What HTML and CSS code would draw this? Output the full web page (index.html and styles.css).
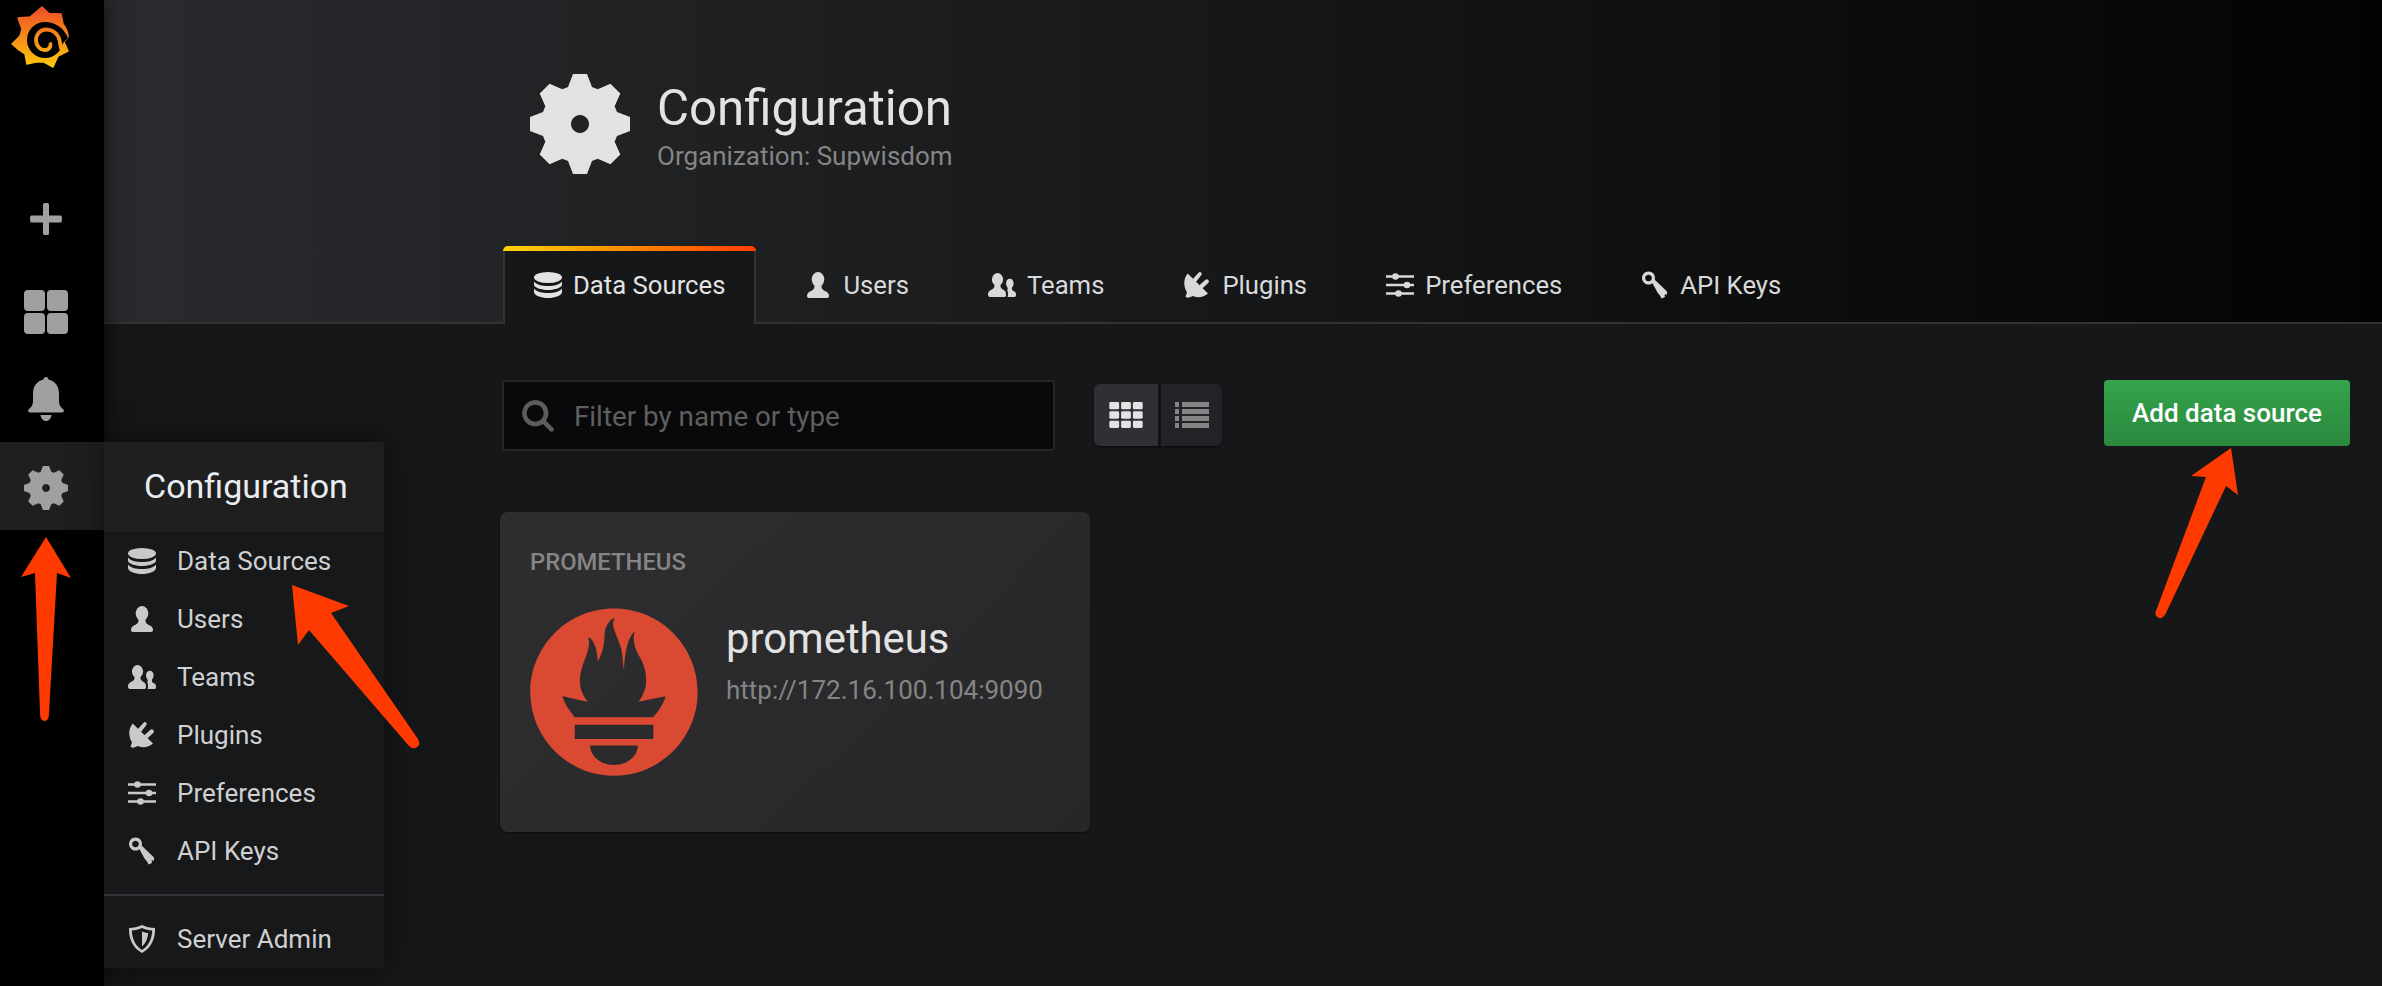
FILE: index.html
```html
<!DOCTYPE html>
<html lang="en">
<head>
<meta charset="utf-8">
<title>Configuration</title>
<link rel="stylesheet" href="styles.css">
</head>
<body>
<svg class="defs" width="0" height="0" aria-hidden="true">
  <defs>
    <linearGradient id="logo-grad" gradientUnits="userSpaceOnUse" x1="0" y1="10" x2="0" y2="68"><stop offset="0" stop-color="#ef5326"/><stop offset="1" stop-color="#fccb0c"/></linearGradient>
    <symbol id="i-gear" viewBox="0 0 100 100"><path fill-rule="evenodd" d="M38 13L43 0H57L62 13L67.68 15.35L80.41 9.69L90.31 19.59L84.65 32.32L87 38L100 43V57L87 62L84.65 67.68L90.31 80.41L80.41 90.31L67.68 84.65L62 87L57 100H43L38 87L32.32 84.65L19.59 90.31L9.69 80.41L15.35 67.68L13 62L0 57V43L13 38L15.35 32.32L9.69 19.59L19.59 9.69L32.32 15.35ZM50 41a9 9 0 1 0 .01 0Z"/></symbol>
    <symbol id="i-db" viewBox="0 0 28 26"><ellipse cx="14" cy="5.5" rx="14" ry="5.5"/><path d="M0 9.5C2 12.6 8 14 14 14S26 12.6 28 9.5V12.5C28 15.6 21 18 14 18S0 15.6 0 12.5Z"/><path d="M0 16.5C2 19.6 8 21 14 21S26 19.6 28 16.5V20C28 23.4 21 26 14 26S0 23.4 0 20Z"/></symbol>
    <symbol id="i-user" viewBox="0 0 22 26"><ellipse cx="11" cy="7.500" rx="6.300" ry="7.500"/><path d="M7.500 12.500C8 17 6 18 3 19.500C1 20.500 0 22 0 24C0 25.300.7 26 2 26H20C21.300 26 22 25.300 22 24C22 22 21 20.500 19 19.500C16 18 14 17 14.500 12.500Z"/></symbol>
    <symbol id="i-users" viewBox="0 0 28 24"><ellipse cx="9.500" cy="6.500" rx="5.600" ry="6.500"/><path d="M6.500 11C7 15 5 16 2.500 17.300C.8 18.200 0 19.500 0 21.500C0 23 .7 24 2 24H16.500C17.600 24 18 23 18 21.500C18 19.500 17.500 18.200 16 17.300C14 16 12 15 12.500 11Z"/><ellipse cx="21.800" cy="10.500" rx="3.800" ry="4.800"/><path d="M19.500 14C20 16.500 19.500 17 19 17C20 18.200 20 20 20 21.500C20 22.800 19.800 23.500 19.500 24H26.500C27.500 24 28 23.300 28 22C28 20 27.500 19 26 18.300C24.500 17.500 23.600 17 24 14Z"/></symbol>
    <symbol id="i-plug" viewBox="0 0 26 26"><path d="M3.700 1.500L24 21.500C20 25 14 26.500 9 24L5 25.500C3.500 26 2 25.500 1.500 24.500L3 20.500C-.5 15-1 7 3.700 1.500Z"/><path d="M8.500 7.500L14.500.8C15.500-.2 16.500-.2 17.300.8C18 2 17.800 2.500 17 3.500L11.500 10.500Z"/><path d="M15 13.500L21.500 7.800C22.500 7 23.500 7 24.300 8C25.300 9.500 25 10 24.200 11L18 16.800Z"/></symbol>
    <symbol id="i-sliders" viewBox="0 0 28 24"><path d="M0 2.300H28V4.700H0ZM0 10.800H28V13.200H0ZM0 19.300H28V21.700H0Z"/><circle cx="9.500" cy="3.500" r="3.300"/><circle cx="21" cy="12" r="3.300"/><circle cx="12.500" cy="20.500" r="3.300"/></symbol>
    <symbol id="i-key" viewBox="0 0 26 28"><path fill-rule="evenodd" d="M6.500 .5A6.500 6.500 0 1 1 6.490 .5ZM6.500 3.700A3.300 3.300 0 1 0 6.510 3.700Z"/><path d="M9 9.500L11.500 7.500L25 20.500L25 23.500L22.500 23.500L23 26L19.500 27.500L18 24.500L15.500 21.500Z"/></symbol>
    <symbol id="i-shield" viewBox="0 0 26 28"><path fill-rule="evenodd" d="M13 0C17 2 21.500 2.800 26 3C26.500 13 22.500 23 13 28C3.500 23-.5 13 0 3C4.500 2.800 9 2 13 0ZM13 3C9.800 4.500 6.200 5.300 2.800 5.600C3 13 6 21 13 25C20 21 23 13 23.200 5.600C19.800 5.300 16.200 4.500 13 3Z"/><path d="M13 6.500V21.500C17 18 18.800 13 19.200 8.200C17 8 15 7.400 13 6.500Z"/></symbol>
    <symbol id="i-search" viewBox="0 0 34 34"><path fill-rule="evenodd" d="M14 0A14 14 0 0 1 25.500 22L33 29.500C34.200 30.700 34.200 32 33.200 33C32.200 34 30.800 34 29.700 33L22.200 25.500A14 14 0 1 1 14 0ZM14 5A9 9 0 1 0 14.010 5Z"/></symbol>
  </defs>
</svg>

<nav class="sidebar">
  <a class="side-logo" href="#">
    <svg class="logo-svg" viewBox="0 0 90 80">
      <path fill="url(#logo-grad)" stroke="url(#logo-grad)" stroke-width="1.500" stroke-linejoin="round" d="M42 7L49 13.500L61 14L63 24C66 28 68 32 68 37L64 42L68 51L58 56L53 67L44 62L36 62L27 64L25 54L19 50L12 44L20 36L22 29L18 18L30 17Z"/>
      <circle cx="45" cy="40" r="18" fill="#000"/>
      <path d="M50 22.500C58 24 65 30 68 38L62 44C60 35 56 29 48 26Z" fill="#000"/>
      <path fill="none" stroke="url(#logo-grad)" stroke-width="3.800" stroke-linecap="round" d="M63 50C61 52 60.500 44 59.500 40C57.500 33 52 29.500 46 29.500C40 29.500 36 34.500 36 40C36 46 40.500 50 45 50C48.500 50 51 47 50.500 44"/>
    </svg>
  </a>
  <a class="side-item" href="#"><svg class="side-plus" viewBox="0 0 32 32"><path d="M13 1.500C13 .5 14 0 16 0S19 .5 19 1.500V12.500H30.500C31.500 12.500 32 13.500 32 16S31.500 19.500 30.500 19.500H19V30.500C19 31.500 18 32 16 32S13 31.500 13 30.500V19.500H1.500C.5 19.500 0 18.500 0 16S.5 12.500 1.500 12.500H13Z"/></svg></a>
  <a class="side-item side-item-dash" href="#">
    <span class="dash-grid"><i></i><i></i><i></i><i></i></span>
  </a>
  <a class="side-item side-item-bell" href="#"><svg class="side-bell" viewBox="0 0 36 44"><path d="M18 0C19.500 0 20.500 1 20.500 2.500C27 4 31 9 31 17V24C31 28 32.500 30 35 32C36.500 33.500 36 35.500 34 35.500H2C0 35.500-.5 33.500 1 32C3.500 30 5 28 5 24V17C5 9 9 4 15.500 2.500C15.500 1 16.500 0 18 0Z"/><path d="M12.500 38H23.500C23 41.500 21 44 18 44S13 41.500 12.500 38Z"/></svg></a>
  <a class="side-item side-item-active" href="#"><svg class="side-gear"><use href="#i-gear"/></svg></a>
</nav>

<main class="main">
  <header class="page-header">
    <div class="page-title-row">
      <svg class="title-gear"><use href="#i-gear"/></svg>
      <div class="title-text">
        <h1 class="page-title">Configuration</h1>
        <div class="page-sub">Organization: Supwisdom</div>
      </div>
    </div>
    <ul class="tabs">
      <li class="tab tab-active"><span class="ico-box"><svg class="ico-db"><use href="#i-db"/></svg></span>Data Sources</li>
      <li class="tab"><span class="ico-box"><svg class="ico-user"><use href="#i-user"/></svg></span>Users</li>
      <li class="tab"><span class="ico-box"><svg class="ico-users"><use href="#i-users"/></svg></span>Teams</li>
      <li class="tab"><span class="ico-box"><svg class="ico-plug"><use href="#i-plug"/></svg></span>Plugins</li>
      <li class="tab"><span class="ico-box"><svg class="ico-sliders"><use href="#i-sliders"/></svg></span>Preferences</li>
      <li class="tab"><span class="ico-box"><svg class="ico-key"><use href="#i-key"/></svg></span>API Keys</li>
    </ul>
  </header>

  <section class="content">
    <div class="toolbar">
      <label class="search">
        <svg class="search-ico"><use href="#i-search"/></svg>
        <span class="search-ph">Filter by name or type</span>
      </label>
      <div class="toggle">
        <span class="toggle-btn toggle-on">
          <svg class="grid-ico" viewBox="0 0 34 26.500"><rect x="0" y="0" width="10" height="7.500" rx="1.500"/><rect x="12" y="0" width="10" height="7.500" rx="1.500"/><rect x="24" y="0" width="10" height="7.500" rx="1.500"/><rect x="0" y="9.500" width="10" height="7.500" rx="1.500"/><rect x="12" y="9.500" width="10" height="7.500" rx="1.500"/><rect x="24" y="9.500" width="10" height="7.500" rx="1.500"/><rect x="0" y="19" width="10" height="7.500" rx="1.500"/><rect x="12" y="19" width="10" height="7.500" rx="1.500"/><rect x="24" y="19" width="10" height="7.500" rx="1.500"/></svg>
        </span>
        <span class="toggle-btn">
          <svg class="list-ico" viewBox="0 0 34 26"><rect x="0" y="0" width="4" height="5"/><rect x="7" y="0" width="27" height="5"/><rect x="0" y="7" width="4" height="5"/><rect x="7" y="7" width="27" height="5"/><rect x="0" y="14" width="4" height="5"/><rect x="7" y="14" width="27" height="5"/><rect x="0" y="21" width="4" height="5"/><rect x="7" y="21" width="27" height="5"/></svg>
        </span>
      </div>
      <a class="add-btn" href="#">Add data source</a>
    </div>

    <article class="card">
      <div class="card-type">PROMETHEUS</div>
      <div class="card-body">
        <svg class="prom-logo" viewBox="0 0 256 257"><path d="M128.001.667C57.311.667 0 57.971 0 128.664c0 70.69 57.31 127.998 128.001 127.998S256 199.354 256 128.664C256 57.97 198.689.667 128 .667zm0 239.562c-20.112 0-36.419-13.435-36.419-30.004h72.838c0 16.57-16.307 30.004-36.419 30.004zm60.15-39.94H67.842V178.47h120.31v21.816h-.002zm-.432-33.045H68.185c-.398-.458-.804-.91-1.188-1.375-12.315-14.954-15.216-22.76-18.032-30.716-.048-.262 14.933 3.06 25.556 5.45 0 0 5.466 1.265 13.458 2.722-7.673-8.994-12.23-20.428-12.23-32.116 0-25.658 19.68-48.079 12.58-66.201 6.91.562 14.3 14.583 14.8 36.505 7.346-10.152 10.42-28.69 10.42-40.056 0-11.769 7.755-25.44 15.512-25.907-6.915 11.396 1.79 21.165 9.53 45.4 2.902 9.103 2.532 24.423 4.772 34.138.744-20.178 4.213-49.62 17.014-59.784-5.647 12.8.836 28.818 5.27 36.518 7.154 12.424 11.49 21.836 11.49 39.638 0 11.936-4.407 23.173-11.84 31.958 8.452-1.586 14.289-3.016 14.289-3.016l27.45-5.355c.002-.002-3.987 16.401-19.314 32.197z"/></svg>
        <div class="card-info">
          <div class="card-name">prometheus</div>
          <div class="card-url">http://172.16.100.104:9090</div>
        </div>
      </div>
    </article>
  </section>
</main>

<aside class="menu">
  <div class="menu-head">Configuration</div>
  <ul class="menu-list">
    <li class="menu-row"><span class="ico-box"><svg class="ico-db"><use href="#i-db"/></svg></span>Data Sources</li>
    <li class="menu-row"><span class="ico-box"><svg class="ico-user"><use href="#i-user"/></svg></span>Users</li>
    <li class="menu-row"><span class="ico-box"><svg class="ico-users"><use href="#i-users"/></svg></span>Teams</li>
    <li class="menu-row"><span class="ico-box"><svg class="ico-plug"><use href="#i-plug"/></svg></span>Plugins</li>
    <li class="menu-row"><span class="ico-box"><svg class="ico-sliders"><use href="#i-sliders"/></svg></span>Preferences</li>
    <li class="menu-row"><span class="ico-box"><svg class="ico-key"><use href="#i-key"/></svg></span>API Keys</li>
    <li class="menu-divider"></li>
    <li class="menu-row"><span class="ico-box"><svg class="ico-shield"><use href="#i-shield"/></svg></span>Server Admin</li>
  </ul>
</aside>

<svg class="arrows" viewBox="0 0 2382 986" aria-hidden="true">
  <path d="M46 537L71 578L57 573L49 713Q49 721 44.500 721Q40 721 40 713L35 573L21 577Z"/>
  <path d="M292 585L349 606L331 613L418 739Q421 744 417 747Q413 750 409 746L309 630L298 645Z"/>
  <path d="M2231 448L2238 495L2226 486L2166 613Q2163 619 2159 618Q2154 616 2156 611L2206 477L2191 476Z"/>
</svg>
</body>
</html>
```

FILE: styles.css
```css
* { box-sizing: border-box; }
html, body { height: 100%; }
body {
  margin: 0;
  display: flex;
  min-height: 986px;
  overflow: hidden;
  background: #161719;
  color: #d8d9da;
  font-family: Roboto, "Liberation Sans", sans-serif;
  font-size: 26px;
}
.defs { position: absolute; }
a { color: inherit; text-decoration: none; }
ul { list-style: none; margin: 0; padding: 0; }

/* sidebar */
.sidebar {
  flex: 0 0 104px;
  width: 104px;
  background: #000;
  display: flex;
  flex-direction: column;
  box-shadow: 0 0 22px rgba(0, 0, 0, .75);
  position: relative;
  z-index: 2;
  fill: #a0a0a0;
}
.side-logo { height: 176px; display: block; }
.logo-svg { width: 90px; height: 80px; display: block; }
.side-item { height: 86px; padding-right: 12px; display: flex; align-items: center; justify-content: center; }
.side-item-dash { margin-top: 7px; }
.side-item-bell { height: 87px; }
.side-item-active { height: 88px; padding-top: 4px; background: #1f1f20; }
.side-plus { width: 32px; height: 32px; }
.side-bell { width: 36px; height: 44px; }
.side-gear { width: 44px; height: 44px; }
.dash-grid { display: grid; grid-template-columns: 21px 21px; gap: 2px; }
.dash-grid i { display: block; height: 21px; border-radius: 4px; background: #a0a0a0; }

/* header */
.main { flex: 1; min-width: 0; display: flex; flex-direction: column; }
.page-header {
  height: 324px;
  padding-left: 399px;
  display: flex;
  flex-direction: column;
  justify-content: space-between;
  background: linear-gradient(90deg, #2a2b2e 0%, #161718 50%, #030303 100%);
  border-bottom: 2px solid #323232;
}
.page-title-row { display: flex; align-items: flex-start; padding: 74px 0 0 27px; }
.title-gear { width: 100px; height: 100px; fill: #e3e3e3; margin-right: 27px; }
.title-text { padding-top: 6px; }
.page-title { margin: 0; font-size: 49.200px; font-weight: 400; line-height: 56px; color: #e3e3e3; }
.page-sub { font-size: 26px; line-height: 32px; margin-top: 4px; color: #858585; }

.tabs { display: flex; gap: 17px; margin-bottom: -2px; }
.tab {
  height: 78px;
  padding: 0 29px 2px;
  border: 2px solid transparent;
  border-bottom: 0;
  display: flex;
  align-items: center;
  gap: 11px;
  font-size: 25.700px;
  color: #d8d9da;
  fill: #d8d9da;
}
.tab-active {
  position: relative;
  background: #161719;
  border-color: #323232;
  border-radius: 6px 6px 0 0;
  color: #e3e3e3;
  fill: #e3e3e3;
}
.tab-active::before {
  content: "";
  position: absolute;
  top: -2px;
  left: -2px;
  right: -2px;
  height: 5px;
  border-radius: 6px 6px 0 0;
  background: linear-gradient(90deg, #ffd500, #ff3c00);
}

.ico-box { flex: 0 0 28px; width: 28px; display: flex; align-items: center; justify-content: center; }
.ico-db { width: 28px; height: 26px; }
.ico-user { width: 22px; height: 26px; }
.ico-users { width: 28px; height: 24px; }
.ico-plug { width: 26px; height: 26px; }
.ico-sliders { width: 28px; height: 24px; }
.ico-key { width: 26px; height: 28px; }
.ico-shield { width: 26px; height: 28px; }

/* content */
.content { flex: 1; padding: 56px 32px 0 396px; }
.toolbar { display: flex; align-items: flex-start; margin-bottom: 61px; }
.search {
  width: 553px;
  height: 71px;
  margin-left: 2px;
  padding-left: 18px;
  display: flex;
  align-items: center;
  gap: 20px;
  background: #09090b;
  border: 2px solid #262628;
  border-radius: 4px;
}
.search-ico { width: 32px; height: 32px; fill: #5c5c5c; }
.search-ph { color: #5f5f5f; font-size: 27.800px; padding-top: 1px; }
.toggle {
  margin: 4px 0 0 39px;
  width: 128px;
  height: 62px;
  display: flex;
  background: #222326;
  border-radius: 6px;
  box-shadow: 0 1px 2px rgba(0, 0, 0, .6);
  overflow: hidden;
}
.toggle-btn { flex: 1; display: flex; align-items: center; justify-content: center; fill: #858585; }
.toggle-on { flex: 0 0 67px; background: #2e3036; fill: #e3e3e3; border-right: 3px solid #111214; }
.grid-ico, .list-ico { width: 34px; height: 26px; }
.add-btn {
  margin-left: auto;
  width: 246px;
  height: 66px;
  display: flex;
  align-items: center;
  justify-content: center;
  border-radius: 4px;
  background: linear-gradient(180deg, #34a44c, #2b883e);
  color: #fff;
  font-weight: 500;
}

.card {
  width: 590px;
  height: 320px;
  padding: 38px 30px 0;
  border-radius: 8px;
  background: linear-gradient(135deg, #2e2e30, #272729);
  box-shadow: 0 1px 2px rgba(0, 0, 0, .5);
}
.card-type { font-size: 23.800px; line-height: 24px; font-weight: 500; color: #858585; }
.card-body { display: flex; align-items: flex-start; gap: 28px; margin-top: 34px; }
.prom-logo { width: 168px; height: 168px; fill: #da4a33; flex: none; }
.card-info { padding-top: 5px; }
.card-name { font-size: 41.800px; line-height: 52px; color: #e3e3e3; }
.card-url { font-size: 26px; line-height: 32px; margin-top: 9px; color: #858585; }

/* hover menu */
.menu {
  position: absolute;
  left: 104px;
  top: 442px;
  width: 280px;
  height: 526px;
  z-index: 3;
  background: #17181a;
  box-shadow: 0 0 30px rgba(0, 0, 0, .55);
}
.menu-head {
  height: 90px;
  padding: 0 0 2px 40px;
  display: flex;
  align-items: center;
  background: #1f1f20;
  color: #e9edf2;
  font-size: 34px;
}
.menu-row {
  height: 58px;
  padding-left: 24px;
  display: flex;
  align-items: center;
  gap: 21px;
  color: #cfd0d1;
  fill: #c9c9c9;
}
.menu-divider { height: 2px; margin: 14px 0; background: #333437; }

/* annotation arrows */
.arrows {
  position: absolute;
  left: 0;
  top: 0;
  width: 2382px;
  height: 986px;
  z-index: 4;
  fill: #ff3a00;
  pointer-events: none;
}
```
